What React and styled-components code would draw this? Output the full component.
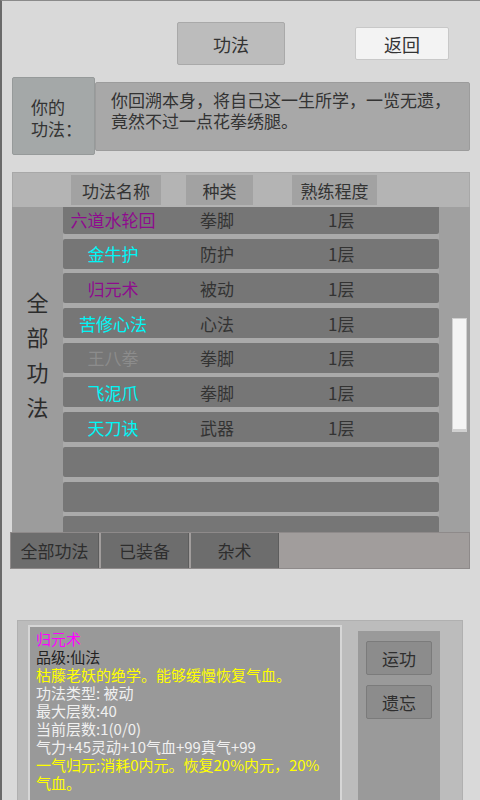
import React from 'react';
import styled, { createGlobalStyle } from 'styled-components';

const GlobalStyle = createGlobalStyle`
  html, body {
    margin: 0;
    padding: 0;
    background: #d8d8d8;
  }
  * {
    box-sizing: border-box;
  }
`;

const FONT = `"Noto Sans CJK SC", "Liberation Sans", sans-serif`;

const Screen = styled.div`
  width: 480px;
  height: 800px;
  overflow: hidden;
  background: #d9d9d9;
  border-left: 2px solid #6a6a6a;
  border-top: 1px solid #8a8a8a;
  font-family: ${FONT};
  color: #333;
  display: flex;
  flex-direction: column;
`;

const TopBar = styled.div`
  display: flex;
  align-items: flex-start;
  padding: 21px 0 0 175px;
  height: 64px;
`;

const TitleBox = styled.div`
  width: 108px;
  height: 43px;
  background: #bcbcbc;
  border: 1px solid #a9a9a9;
  border-radius: 2px;
  display: flex;
  align-items: center;
  justify-content: center;
  font-size: 18px;
`;

const BackButton = styled.button`
  width: 94px;
  height: 33px;
  margin-top: 5px;
  margin-left: 70px;
  background: #f3f3f3;
  border: 1px solid #c8c8c8;
  border-radius: 2px;
  font-family: ${FONT};
  font-size: 18px;
  color: #333;
  padding: 0;
`;

const InfoRow = styled.div`
  display: flex;
  align-items: flex-start;
  margin: 12px 0 0 10px;
  width: 458px;
`;

const InfoLabel = styled.div`
  width: 83px;
  height: 78px;
  background: #a4a8a8;
  border: 1px solid #969a9a;
  border-radius: 2px;
  font-size: 17px;
  line-height: 22px;
  padding: 18px 0 0 18px;
`;

const InfoText = styled.div`
  flex: 1;
  height: 69px;
  margin-top: 5px;
  background: #a8a8a8;
  border: 1px solid #9c9c9c;
  border-radius: 2px;
  font-size: 17px;
  line-height: 21px;
  padding: 6px 8px 0 15px;
`;

const Table = styled.div`
  margin: 17px 0 0 10px;
  width: 458px;
  display: flex;
  flex-direction: column;
`;

const TableHead = styled.div`
  height: 35px;
  background: #b4b4b4;
  border: 1px solid #a8a8a8;
  border-bottom: none;
  display: flex;
  align-items: center;
  padding-left: 58px;
`;

const HeadCell = styled.div`
  width: ${(p) => p.$w}px;
  margin-left: ${(p) => p.$gap}px;
  height: 30px;
  background: #a2a2a2;
  display: flex;
  align-items: center;
  justify-content: center;
  font-size: 17px;
`;

const TableBody = styled.div`
  height: 325px;
  background: #a0a0a0;
  display: flex;
  overflow: hidden;
`;

const SideLabel = styled.div`
  width: 51px;
  background: #9c9c9c;
  display: flex;
  flex-direction: column;
  align-items: center;
  justify-content: center;
  padding-bottom: 32px;
  font-size: 22px;
  line-height: 35px;
  color: #2c2c2c;
`;

const RowList = styled.div`
  width: 376px;
  margin-top: -3px;
  background: #aaaaaa;
  display: flex;
  flex-direction: column;
  gap: 4.7px;
`;

const Row = styled.div`
  height: 30px;
  flex-shrink: 0;
  background: #767676;
  border-radius: 2px;
  display: flex;
  align-items: center;
  font-size: 17px;
`;

const NameCell = styled.div`
  width: 100px;
  text-align: center;
  color: ${(p) => p.$color};
`;

const TypeCell = styled.div`
  width: 126px;
  padding-left: 37px;
  color: #333;
`;

const LevelCell = styled.div`
  padding-left: 39px;
  color: #333;
`;

const ScrollTrack = styled.div`
  flex: 1;
  padding: 111px 0 0 13px;
`;

const ScrollThumb = styled.div`
  width: 15px;
  height: 114px;
  background: #f4f4f4;
  border: 1px solid #d0d0d0;
  border-bottom-width: 3px;
`;

const TabBar = styled.div`
  height: 37px;
  margin-left: -2px;
  background: #a19d9c;
  border: 1px solid #8e8a8a;
  display: flex;
  gap: 2px;
`;

const Tab = styled.div`
  width: 88px;
  background: #6d6d6d;
  border-right: 1px solid #5d5d5d;
  display: flex;
  align-items: center;
  justify-content: center;
  font-size: 17px;
  color: #2e2e2e;
`;

const BottomPanel = styled.div`
  margin: 51px 0 0 15px;
  width: 446px;
  flex: 1;
  background: #bcbcbc;
  border: 1px solid #b0b0b0;
  display: flex;
  align-items: flex-start;
  padding: 4px 0 0 10px;
`;

const Detail = styled.div`
  width: 314px;
  height: 200px;
  background: #999999;
  border: 2px solid #d6d6d6;
  padding: 3px 6px;
  font-size: 15px;
  line-height: 18px;
`;

const Line = styled.div`
  color: ${(p) => p.$color || '#f0f0f0'};
`;

const SideActions = styled.div`
  width: 82px;
  height: 200px;
  margin: 6px 0 0 16px;
  background: #9a9a9a;
  display: flex;
  flex-direction: column;
  align-items: center;
  gap: 10px;
  padding-top: 10px;
`;

const ActionButton = styled.button`
  width: 66px;
  height: 34px;
  background: #8c8c8c;
  border: 1px solid #7b7b7b;
  border-radius: 2px;
  font-family: ${FONT};
  font-size: 17px;
  color: #2e2e2e;
  padding: 0;
`;

const PURPLE = '#8e0c8e';
const CYAN = '#00f6f6';
const DIM = '#8c8c8c';

const skills = [
  { name: '六道水轮回', color: PURPLE, type: '拳脚' },
  { name: '金牛护', color: CYAN, type: '防护' },
  { name: '归元术', color: PURPLE, type: '被动' },
  { name: '苦修心法', color: CYAN, type: '心法' },
  { name: '王八拳', color: DIM, type: '拳脚' },
  { name: '飞泥爪', color: CYAN, type: '拳脚' },
  { name: '天刀诀', color: CYAN, type: '武器' },
];

const App = () => {
  const rows = [...skills, null, null, null];
  return (
    <Screen>
      <GlobalStyle />
      <TopBar>
        <TitleBox>功法</TitleBox>
        <BackButton>返回</BackButton>
      </TopBar>

      <InfoRow>
        <InfoLabel>
          你的
          <br />
          功法：
        </InfoLabel>
        <InfoText>你回溯本身，将自己这一生所学，一览无遗，竟然不过一点花拳绣腿。</InfoText>
      </InfoRow>

      <Table>
        <TableHead>
          <HeadCell $w={90} $gap={0}>功法名称</HeadCell>
          <HeadCell $w={67} $gap={25}>种类</HeadCell>
          <HeadCell $w={85} $gap={39}>熟练程度</HeadCell>
        </TableHead>
        <TableBody>
          <SideLabel>
            <span>全</span>
            <span>部</span>
            <span>功</span>
            <span>法</span>
          </SideLabel>
          <RowList>
            {rows.map((s, i) =>
              s ? (
                <Row key={i}>
                  <NameCell $color={s.color}>{s.name}</NameCell>
                  <TypeCell>{s.type}</TypeCell>
                  <LevelCell>1层</LevelCell>
                </Row>
              ) : (
                <Row key={i} />
              )
            )}
          </RowList>
          <ScrollTrack>
            <ScrollThumb />
          </ScrollTrack>
        </TableBody>
        <TabBar>
          <Tab>全部功法</Tab>
          <Tab>已装备</Tab>
          <Tab>杂术</Tab>
        </TabBar>
      </Table>

      <BottomPanel>
        <Detail>
          <Line $color="#ff00ff">归元术</Line>
          <Line $color="#222">品级:仙法</Line>
          <Line $color="#ffff00">枯藤老妖的绝学。能够缓慢恢复气血。</Line>
          <Line>功法类型: 被动</Line>
          <Line>最大层数:40</Line>
          <Line>当前层数:1(0/0)</Line>
          <Line>气力+45灵动+10气血+99真气+99</Line>
          <Line $color="#ffff00">一气归元:消耗0内元。恢复20%内元，20%气血。</Line>
        </Detail>
        <SideActions>
          <ActionButton>运功</ActionButton>
          <ActionButton>遗忘</ActionButton>
        </SideActions>
      </BottomPanel>
    </Screen>
  );
};

export default App;
